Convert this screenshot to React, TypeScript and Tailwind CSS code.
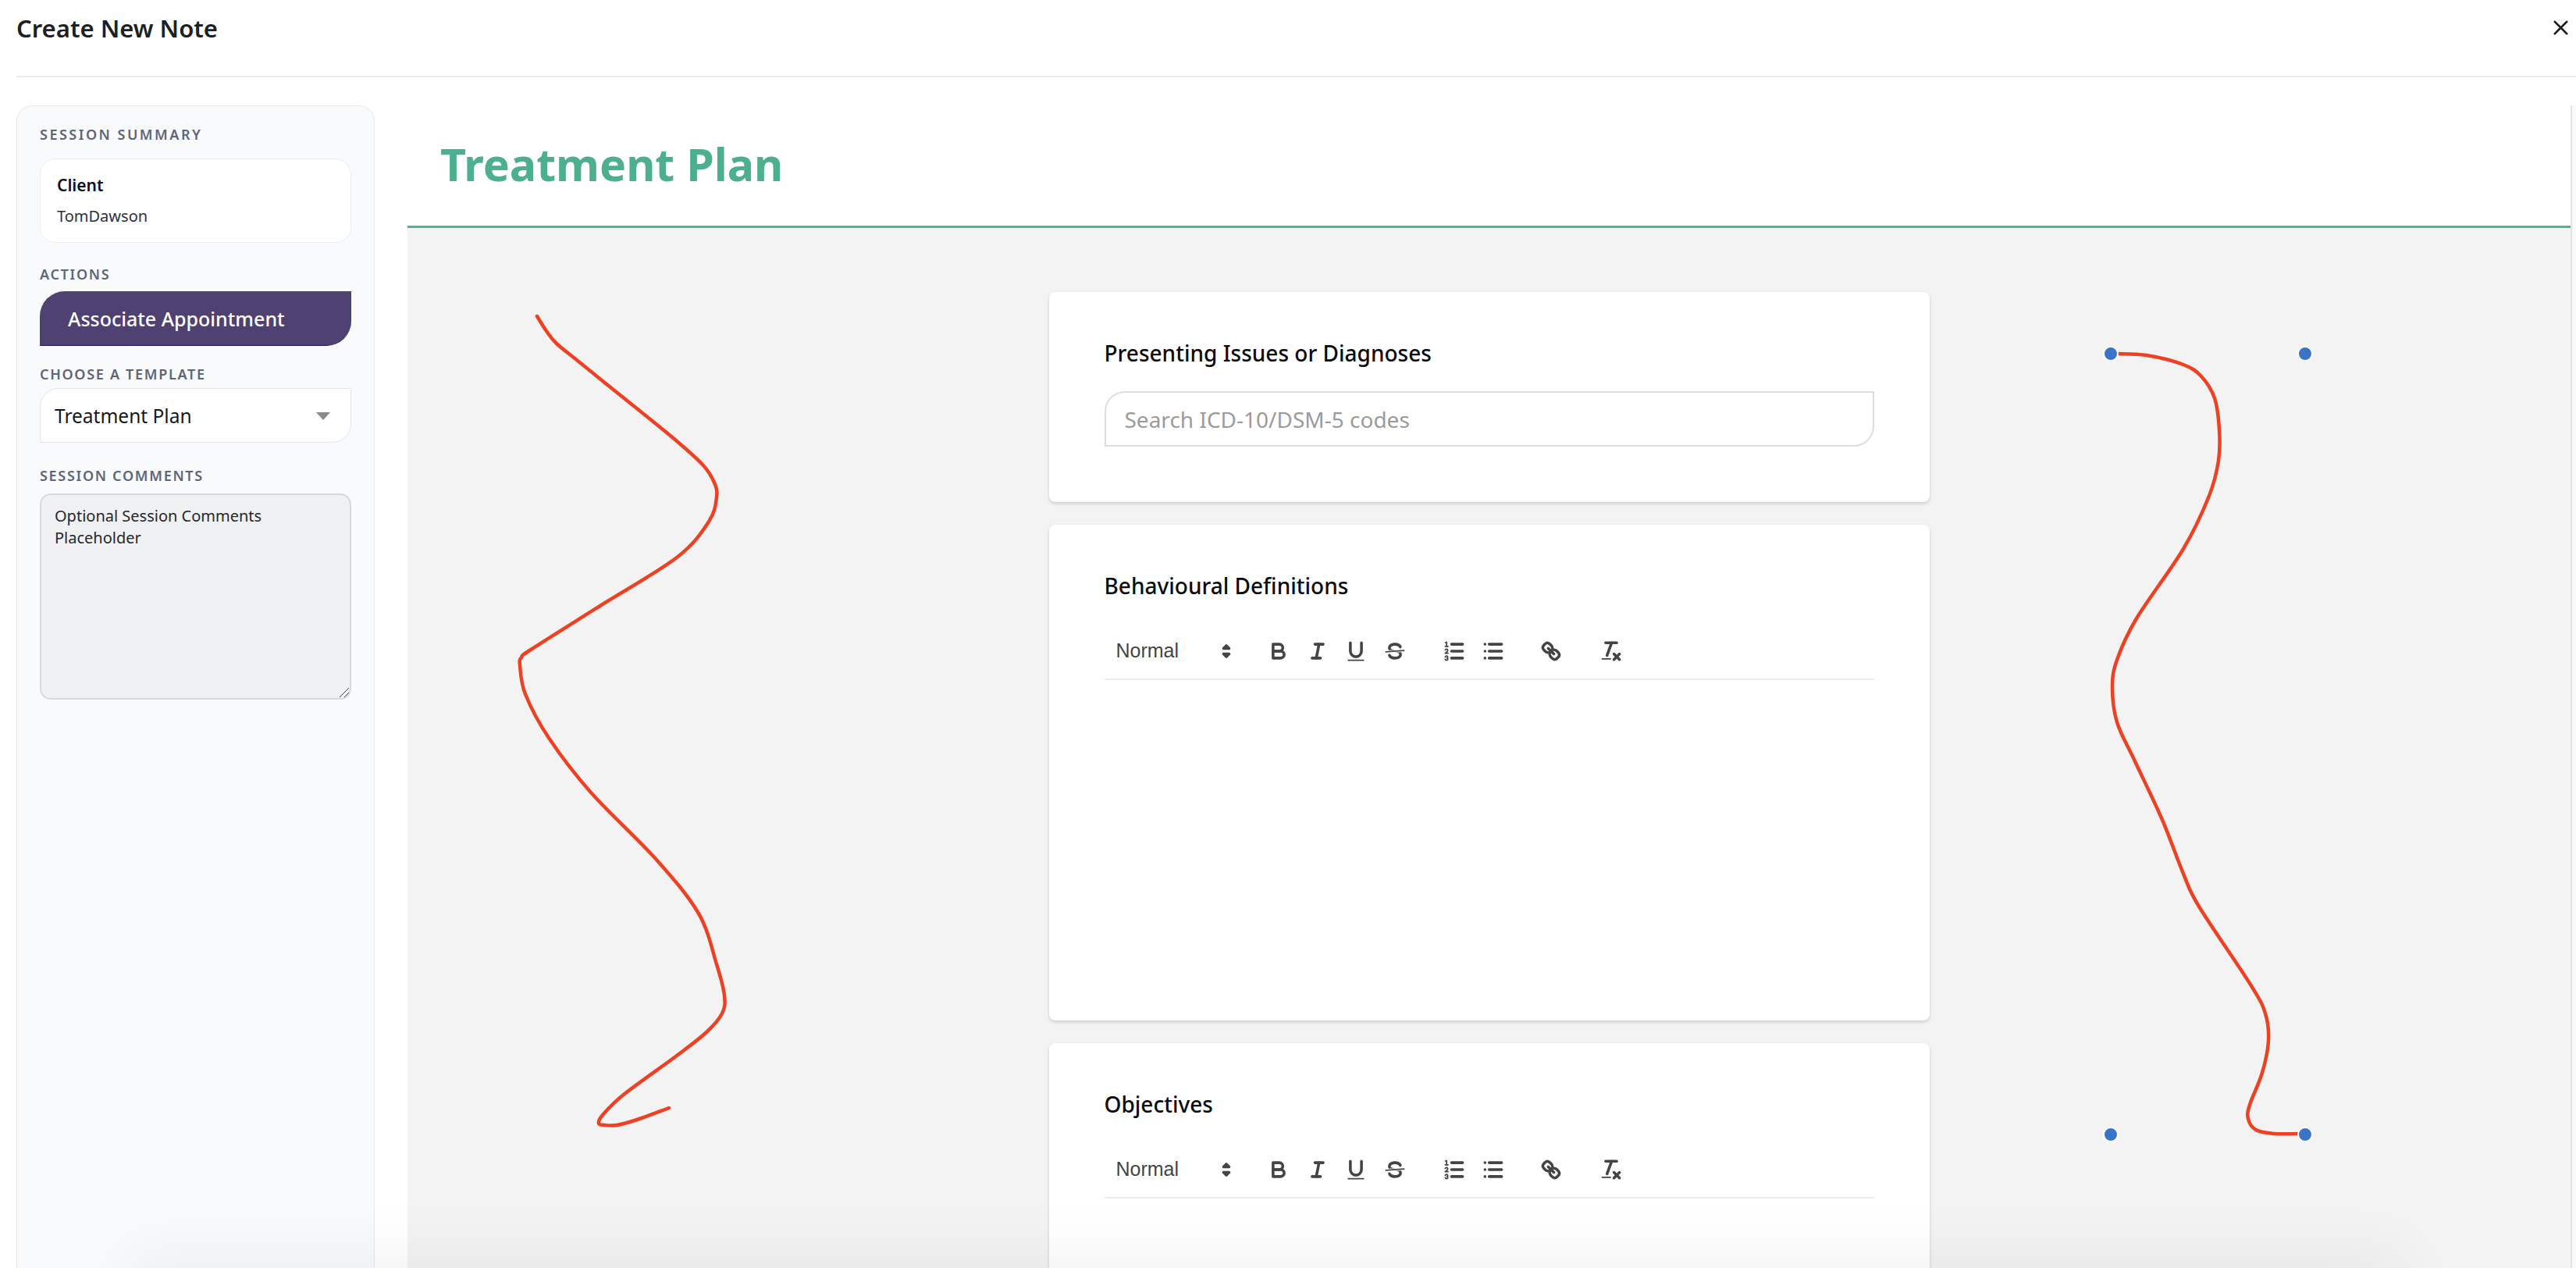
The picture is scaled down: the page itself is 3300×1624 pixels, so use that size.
import React from "react";
import { X } from "lucide-react";

type Pt = [number, number];

const leftLine: Pt[] = [
  [688, 405], [700, 424], [713, 440], [740, 462], [787, 500], [860, 559], [900, 595], [915, 618], [918, 637], [908, 668],
  [867, 714], [767, 777], [680, 832], [668, 842], [666, 852], [673, 889], [703, 945], [757, 1015],
  [840, 1100], [895, 1170], [918, 1235], [928, 1275], [925, 1298], [905, 1322], [867, 1352], [800, 1401],
  [772, 1428], [767, 1439], [775, 1441], [790, 1441], [813, 1435], [857, 1419],
];

const rightLine: Pt[] = [
  [2713, 453], [2750, 455], [2797, 467], [2820, 482], [2837, 510], [2843, 550], [2842, 590], [2830, 635],
  [2797, 703], [2737, 792], [2712, 845], [2706, 880], [2712, 925], [2735, 975], [2770, 1050], [2797, 1119],
  [2817, 1161], [2883, 1261], [2902, 1298], [2906, 1333], [2898, 1374], [2882, 1415], [2880, 1433],
  [2890, 1447], [2913, 1452], [2943, 1452],
];

const dots: Pt[] = [
  [2704, 453], [2953, 453], [2704, 1453], [2953, 1453],
];

// catmull-rom through the points, good enough for the hand drawn lines
const smooth = (pts: Pt[]) => {
  let d = `M${pts[0][0]},${pts[0][1]}`;
  for (let i = 0; i < pts.length - 1; i++) {
    const p0 = pts[Math.max(i - 1, 0)];
    const p1 = pts[i];
    const p2 = pts[i + 1];
    const p3 = pts[Math.min(i + 2, pts.length - 1)];
    d += ` C${p1[0] + (p2[0] - p0[0]) / 6},${p1[1] + (p2[1] - p0[1]) / 6} ${p2[0] - (p3[0] - p1[0]) / 6},${p2[1] - (p3[1] - p1[1]) / 6} ${p2[0]},${p2[1]}`;
  }
  return d;
};

const Icon = ({ children }: { children: React.ReactNode }) => (
  <button className="flex h-[42px] w-[49.5px] items-center justify-center">
    <svg
      viewBox="0 0 18 18"
      className="h-[32px] w-[32px]"
      fill="none"
      stroke="#444"
      strokeWidth={2}
      strokeLinecap="round"
      strokeLinejoin="round"
    >
      {children}
    </svg>
  </button>
);

const Toolbar = () => (
  <div className="mt-[29px] flex h-[73px] items-center border-b-2 border-[#ebebeb]">
    <div className="relative mr-[27px] flex h-[42px] w-[172px] items-center pl-[15px] font-['Liberation_Sans',sans-serif] text-[25px] text-[#444]">
      Normal
      <svg viewBox="0 0 18 18" className="absolute right-0 top-[5px] h-[32px] w-[32px]" fill="#444" stroke="#444" strokeWidth={2} strokeLinejoin="round">
        <polygon points="7 11 9 13 11 11 7 11" />
        <polygon points="7 7 9 5 11 7 7 7" />
      </svg>
    </div>
    <div className="mr-[27px] flex">
      <Icon>
        <path d="M5,4H9.5A2.5,2.5,0,0,1,12,6.5v0A2.5,2.5,0,0,1,9.5,9H5A0,0,0,0,1,5,9V4A0,0,0,0,1,5,4Z" />
        <path d="M5,9h5.5A2.5,2.5,0,0,1,13,11.5v0A2.5,2.5,0,0,1,10.5,14H5a0,0,0,0,1,0,0V9A0,0,0,0,1,5,9Z" />
      </Icon>
      <Icon>
        <line x1="7" x2="13" y1="4" y2="4" />
        <line x1="5" x2="11" y1="14" y2="14" />
        <line x1="8" x2="10" y1="14" y2="4" />
      </Icon>
      <Icon>
        <path d="M5,3V9a4.012,4.012,0,0,0,4,4H9a4.012,4.012,0,0,0,4-4V3" />
        <rect x="3" y="15" width="12" height="1" rx="0.5" ry="0.5" fill="#444" stroke="none" />
      </Icon>
      <Icon>
        <line x1="15.5" x2="2.5" y1="8.5" y2="9.5" strokeWidth={1} />
        <path stroke="none" fill="#444" d="M9.007,8C6.542,7.791,6,7.519,6,6.5,6,5.792,7.283,5,9,5c1.571,0,2.765.679,2.969,1.309a1,1,0,0,0,1.9-.617C13.356,4.106,11.354,3,9,3,6.2,3,4,4.538,4,6.5a3.2,3.2,0,0,0,.5,1.843Z" />
        <path stroke="none" fill="#444" d="M8.984,10C11.457,10.208,12,10.479,12,11.5c0,.708-1.283,1.5-3,1.5-1.571,0-2.765-.679-2.969-1.309a1,1,0,1,0-1.9.617C4.644,13.894,6.646,15,9,15c2.8,0,5-1.538,5-3.5a3.2,3.2,0,0,0-.5-1.843Z" />
      </Icon>
    </div>
    <div className="mr-[25px] flex">
      <Icon>
        <line x1="7" x2="15" y1="4" y2="4" />
        <line x1="7" x2="15" y1="9" y2="9" />
        <line x1="7" x2="15" y1="14" y2="14" />
        <line x1="2.5" x2="4.5" y1="5.5" y2="5.5" strokeWidth={1} />
        <path stroke="none" fill="#444" d="M3.5,6A0.5,0.5,0,0,1,3,5.5V3.085l-0.276.138A0.5,0.5,0,0,1,2.053,3c-0.124-.247-0.023-0.324.224-0.447l1-.5A0.5,0.5,0,0,1,4,2.5v3A0.5,0.5,0,0,1,3.5,6Z" />
        <path strokeWidth={1} d="M4.5,10.5h-2c0-.234,1.85-1.076,1.85-2.234A0.959,0.959,0,0,0,2.5,8.156" />
        <path strokeWidth={1} d="M2.5,14.846a0.959,0.959,0,0,0,1.85-.109A0.7,0.7,0,0,0,3.75,14a0.688,0.688,0,0,0,.6-0.736,0.959,0.959,0,0,0-1.85-.109" />
      </Icon>
      <Icon>
        <line x1="6" x2="15" y1="4" y2="4" />
        <line x1="6" x2="15" y1="9" y2="9" />
        <line x1="6" x2="15" y1="14" y2="14" />
        <line x1="3" x2="3" y1="4" y2="4" />
        <line x1="3" x2="3" y1="9" y2="9" />
        <line x1="3" x2="3" y1="14" y2="14" />
      </Icon>
    </div>
    <div className="mr-[27px] flex">
      <Icon>
        <line x1="7" x2="11" y1="7" y2="11" />
        <path d="M8.9,4.577a3.476,3.476,0,0,1,.36,4.679A3.476,3.476,0,0,1,4.577,8.9C3.185,7.5,2.035,6.4,4.217,4.217S7.5,3.185,8.9,4.577Z" />
        <path d="M13.423,9.1a3.476,3.476,0,0,0-4.679-.36,3.476,3.476,0,0,0,.36,4.679c1.392,1.392,2.5,2.542,4.679.36S14.815,10.5,13.423,9.1Z" />
      </Icon>
    </div>
    <Icon>
      <line x1="5" x2="13" y1="3" y2="3" />
      <line x1="6" x2="9.35" y1="12" y2="3" />
      <line x1="11" x2="15" y1="11" y2="15" />
      <line x1="15" x2="11" y1="11" y2="15" />
      <rect x="2" y="14" width="7" height="1" rx="0.5" ry="0.5" fill="#444" stroke="none" />
    </Icon>
  </div>
);

const Label = ({ children, className }: { children: React.ReactNode; className: string }) => (
  <div className={`h-[24px] text-[18px] font-semibold leading-[24px] text-[#5e6578] ${className}`}>
    {children}
  </div>
);

const CardTitle = ({ children }: { children: React.ReactNode }) => (
  <div className="h-[38px] text-[28px] font-medium leading-[38px] text-[#0b0b0b]">{children}</div>
);

const App = () => {
  return (
    <div className="relative h-[1624px] w-[3300px] overflow-hidden bg-white font-['Noto_Sans',sans-serif]">
      <header className="ml-[21px] flex h-[99px] items-start justify-between border-b-2 border-[#ebebeb] pr-[4px] pt-[15px]">
        <h1 className="text-[31px] font-semibold leading-[42px] text-[#1c1f24]">Create New Note</h1>
        <X size={31} strokeWidth={2} className="mt-[5px] text-[#1c1f24]" />
      </header>

      <div className="flex pl-[21px] pt-[36px]">
        <aside className="h-[1600px] w-[459px] shrink-0 rounded-[20px] border border-[#e6e8ec] bg-[#f9fafb] px-[29px] pt-[24px]">
          <Label className="mb-[19px] tracking-[2.5px]">SESSION SUMMARY</Label>
          <div className="h-[108px] rounded-[20px] border border-[#eceef1] bg-white px-[21px] pt-[18px]">
            <div className="text-[21px] font-semibold leading-[30px] text-[#0b1220]">Client</div>
            <div className="mt-[10px] text-[20px] leading-[30px] text-[#2a3344]">TomDawson</div>
          </div>

          <Label className="mb-[10px] mt-[28px] tracking-[1.7px]">ACTIONS</Label>
          <button className="flex h-[70px] w-full items-center rounded-tl-[32px] rounded-br-[32px] border-b border-[#1f1a66] bg-[#4f4272] pl-[36px] pt-[3px] text-[25px] font-medium text-white">
            Associate Appointment
          </button>

          <Label className="mb-[6px] mt-[24px] tracking-[1.7px]">CHOOSE A TEMPLATE</Label>
          <div className="flex h-[70px] items-center justify-between rounded-tl-[24px] rounded-br-[24px] border border-[#e3e4e8] bg-white pl-[18px] pr-[26px] pt-[2px] text-[24.5px] text-[#15181d]">
            Treatment Plan
            <div className="h-0 w-0 border-x-[9px] border-t-[10px] border-x-transparent border-t-[#8a8a8a]" />
          </div>

          <Label className="mb-[11px] mt-[30px] tracking-[1.7px]">SESSION COMMENTS</Label>
          <div className="relative">
            <textarea
              className="block h-[264px] w-full resize-none rounded-[14px] border-2 border-[#d8d9dd] bg-[#f0f1f3] px-[17px] py-[13px] text-[20px] leading-[28px] outline-none placeholder:text-[#24282e]"
              placeholder="Optional Session Comments Placeholder"
              readOnly
            />
            <svg className="absolute bottom-[2px] right-[2px]" width={14} height={14} stroke="#444" strokeWidth={1}>
              <line x1="1" y1="13" x2="13" y2="1" />
              <line x1="7" y1="13" x2="13" y2="7" />
            </svg>
          </div>
        </aside>

        <main className="ml-[42px] w-[2771px] shrink-0">
          <div className="flex h-[157px] items-center border-b-[3px] border-[#4fb394] pb-[3px] pl-[42px]">
            <h2 className="text-[57.3px] font-bold leading-none text-[#4caf90]">Treatment Plan</h2>
          </div>
          <div className="h-[1400px] bg-[#f3f3f3] pt-[82px]">
            <div className="mx-auto flex w-[1128px] flex-col gap-[29px]">
              <section className="h-[269px] rounded-[8px] bg-white px-[71px] pt-[59px] shadow-[0_2px_4px_rgba(0,0,0,0.16)]">
                <CardTitle>Presenting Issues or Diagnoses</CardTitle>
                <input
                  className="mt-[30px] block h-[71px] w-full rounded-tl-[26px] rounded-br-[26px] border-2 border-[#dedede] bg-white px-[24px] text-[28px] outline-none placeholder:text-[#9b9b9b]"
                  placeholder="Search ICD-10/DSM-5 codes"
                  readOnly
                />
              </section>
              <section className="h-[635px] rounded-[8px] bg-white px-[71px] pt-[59px] shadow-[0_2px_4px_rgba(0,0,0,0.16)]">
                <CardTitle>Behavioural Definitions</CardTitle>
                <Toolbar />
              </section>
              <section className="h-[635px] rounded-[8px] bg-white px-[71px] pt-[59px] shadow-[0_2px_4px_rgba(0,0,0,0.16)]">
                <CardTitle>Objectives</CardTitle>
                <Toolbar />
              </section>
            </div>
          </div>
        </main>

        <div className="h-[1600px] w-[7px] shrink-0 border-l-2 border-[#e4e4e4] bg-[#f9f9f9]" />
      </div>

      {/* annotation lines sitting on top of the page */}
      <svg className="pointer-events-none absolute left-0 top-0" width={3300} height={1624} fill="none">
        <path d={smooth(leftLine)} stroke="#ee4023" strokeWidth={4.5} strokeLinecap="round" strokeLinejoin="round" />
        <path d={smooth(rightLine)} stroke="#ee4023" strokeWidth={4.5} strokeLinecap="round" strokeLinejoin="round" />
        {dots.map(([x, y]) => (
          <circle key={`${x}-${y}`} cx={x} cy={y} r={9} fill="#3a74c8" stroke="#fff" strokeWidth={2} />
        ))}
      </svg>

      {/* shadow coming up from the bottom edge */}
      <div className="absolute left-[200px] right-[260px] top-[1645px] h-[10px] shadow-[0_0_80px_40px_rgba(0,0,0,0.05)]" />
    </div>
  );
};

export default App;
